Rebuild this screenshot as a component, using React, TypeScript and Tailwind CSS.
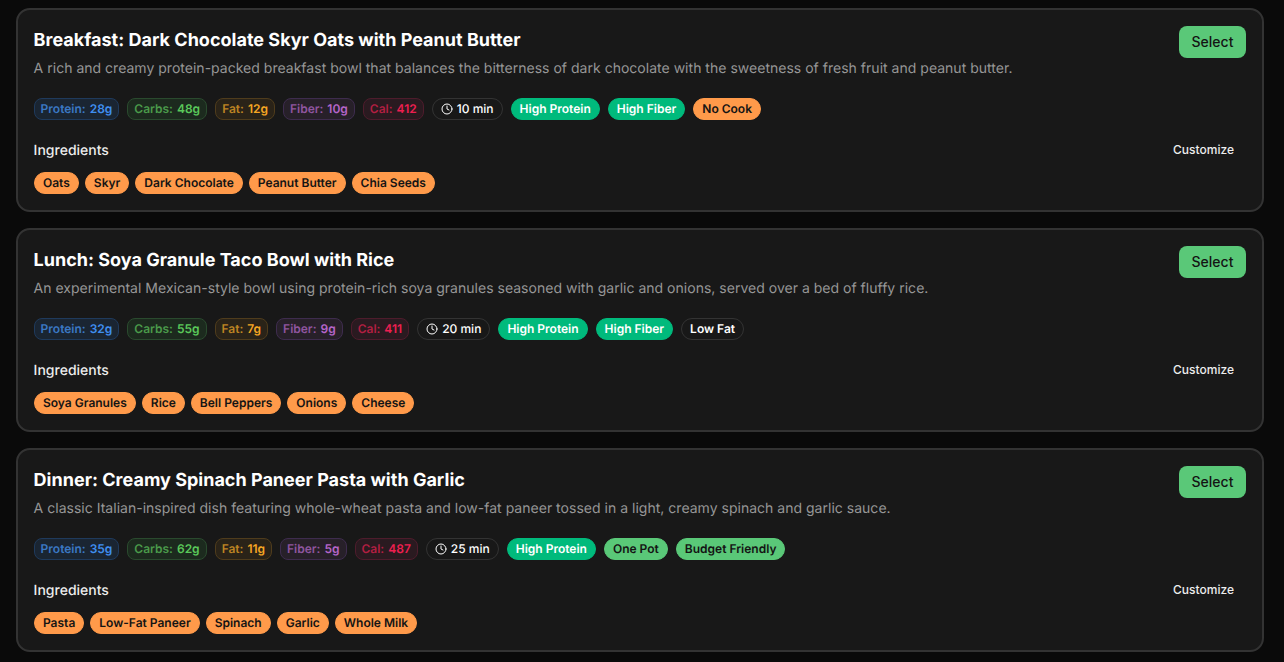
import { Clock } from 'lucide-react';

interface Tag {
  label: string;
  tone: 'green' | 'soft' | 'orange' | 'outline';
}

interface Meal {
  title: string;
  description: string;
  protein: string;
  carbs: string;
  fat: string;
  fiber: string;
  cal: string;
  time: string;
  tags: Tag[];
  ingredients: string[];
}

const meals: Meal[] = [
  {
    title: 'Breakfast: Dark Chocolate Skyr Oats with Peanut Butter',
    description:
      'A rich and creamy protein-packed breakfast bowl that balances the bitterness of dark chocolate with the sweetness of fresh fruit and peanut butter.',
    protein: '28g',
    carbs: '48g',
    fat: '12g',
    fiber: '10g',
    cal: '412',
    time: '10 min',
    tags: [
      { label: 'High Protein', tone: 'green' },
      { label: 'High Fiber', tone: 'green' },
      { label: 'No Cook', tone: 'orange' },
    ],
    ingredients: ['Oats', 'Skyr', 'Dark Chocolate', 'Peanut Butter', 'Chia Seeds'],
  },
  {
    title: 'Lunch: Soya Granule Taco Bowl with Rice',
    description:
      'An experimental Mexican-style bowl using protein-rich soya granules seasoned with garlic and onions, served over a bed of fluffy rice.',
    protein: '32g',
    carbs: '55g',
    fat: '7g',
    fiber: '9g',
    cal: '411',
    time: '20 min',
    tags: [
      { label: 'High Protein', tone: 'green' },
      { label: 'High Fiber', tone: 'green' },
      { label: 'Low Fat', tone: 'outline' },
    ],
    ingredients: ['Soya Granules', 'Rice', 'Bell Peppers', 'Onions', 'Cheese'],
  },
  {
    title: 'Dinner: Creamy Spinach Paneer Pasta with Garlic',
    description:
      'A classic Italian-inspired dish featuring whole-wheat pasta and low-fat paneer tossed in a light, creamy spinach and garlic sauce.',
    protein: '35g',
    carbs: '62g',
    fat: '11g',
    fiber: '5g',
    cal: '487',
    time: '25 min',
    tags: [
      { label: 'High Protein', tone: 'green' },
      { label: 'One Pot', tone: 'soft' },
      { label: 'Budget Friendly', tone: 'soft' },
    ],
    ingredients: ['Pasta', 'Low-Fat Paneer', 'Spinach', 'Garlic', 'Whole Milk'],
  },
];

const toneClass = {
  green: 'bg-[#00ba7c] text-white border-[#00ba7c]',
  soft: 'bg-[#5ac878] text-[#141414] border-[#5ac878]',
  orange: 'bg-[#ff9a4a] text-[#141414] border-[#ff9a4a]',
  outline: 'bg-transparent text-white border-[#333333]',
};

function Macro({ label, value, className, labelClass }: { label: string; value: string; className: string; labelClass: string }) {
  return (
    <span className={`inline-flex h-[22px] items-center gap-1 rounded-lg border px-[6px] text-xs font-semibold ${className}`}>
      <span className={labelClass}>{label}</span>
      <span>{value}</span>
    </span>
  );
}

function Pill({ label, tone }: Tag) {
  return (
    <span className={`inline-flex h-[22px] items-center rounded-full border px-2 text-xs font-semibold ${toneClass[tone]}`}>
      {label}
    </span>
  );
}

function MealCard({ meal }: { meal: Meal }) {
  return (
    <div className="rounded-[14px] border-2 border-[#333333] bg-[#181818] py-4 pr-4 pl-[15.6px]">
      <div className="flex items-start justify-between gap-4">
        <div className="min-w-0 pt-px">
          <h2 className="text-lg font-bold tracking-[0.01px] text-white">{meal.title}</h2>
          <p className="mt-[4px] text-sm tracking-[0.016px] text-[#969696]">{meal.description}</p>
        </div>
        <button className="h-8 min-w-[67px] shrink-0 rounded-lg bg-[#5ac878] px-3 text-sm font-medium text-[#141414]">
          Select
        </button>
      </div>

      <div className="mt-[19px] flex flex-wrap items-center gap-2">
        <Macro label="Protein:" value={meal.protein} className="border-[#1f3a5c] bg-[#1a2532] text-[#3f8eef]" labelClass="text-[#3a78c4]" />
        <Macro label="Carbs:" value={meal.carbs} className="border-[#2a4a2e] bg-[#1c2a1e] text-[#5ac85a]" labelClass="text-[#4a9a4a]" />
        <Macro label="Fat:" value={meal.fat} className="border-[#4f3c1c] bg-[#2a2318] text-[#f5a623]" labelClass="text-[#bd8423]" />
        <Macro label="Fiber:" value={meal.fiber} className="border-[#3e2c4e] bg-[#272029] text-[#b565c9]" labelClass="text-[#8f559f]" />
        <Macro label="Cal:" value={meal.cal} className="border-[#4e1c2c] bg-[#2a1a20] text-[#ee1f50]" labelClass="text-[#b31f42]" />
        <span className="inline-flex h-[22px] items-center gap-1 rounded-full border border-[#333333] px-2 text-xs font-medium text-white">
          <Clock size={12} strokeWidth={2} />
          {meal.time}
        </span>
        {meal.tags.map((tag) => (
          <Pill key={tag.label} {...tag} />
        ))}
      </div>

      <div className="mt-5 flex items-start justify-between">
        <span className="pt-px text-sm font-medium text-[#ededed]">Ingredients</span>
        <button className="h-5 px-3 text-xs font-medium text-[#ededed]">Customize</button>
      </div>

      <div className="mt-[11px] flex flex-wrap gap-[6px] pl-[0.4px]">
        {meal.ingredients.map((item) => (
          <Pill key={item} label={item} tone="orange" />
        ))}
      </div>
    </div>
  );
}

export default function App() {
  return (
    <div className="min-h-screen bg-[#0a0a0a] pl-4 pr-5 pt-2 font-['Inter',sans-serif] [text-rendering:geometricPrecision]">
      <div className="flex flex-col gap-4">
        {meals.map((meal) => (
          <MealCard key={meal.title} meal={meal} />
        ))}
      </div>
    </div>
  );
}
